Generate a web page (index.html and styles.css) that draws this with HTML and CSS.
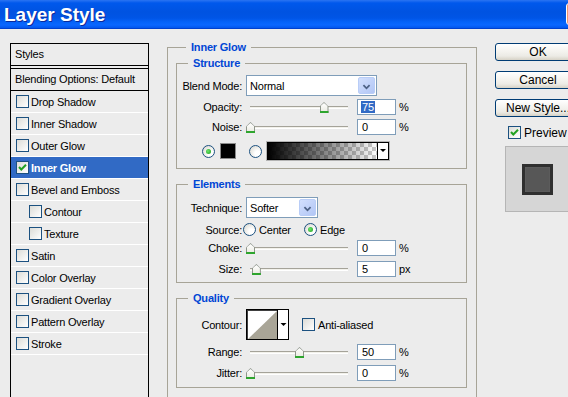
FILE: index.html
```html
<!DOCTYPE html>
<html lang="en">
<head>
  <meta charset="UTF-8">
  <title>Layer Style</title>
  <link rel="stylesheet" href="styles.css">
</head>
<body>
<div class="window">
  <div class="titlebar">
    <span class="title">Layer Style</span>
    <span class="close"></span>
  </div>

  <div class="main">
    <!-- list of effects -->
    <div class="styles-panel">
      <div class="panel-head">Styles</div>
      <div class="panel-blend">Blending Options: Default</div>
      <div class="style-item"><span class="check"></span>Drop Shadow</div>
      <div class="style-item"><span class="check"></span>Inner Shadow</div>
      <div class="style-item"><span class="check"></span>Outer Glow</div>
      <div class="style-item selected"><span class="check"><svg width="11" height="11" viewBox="0 0 11 11"><polyline points="2,5 4.3,7.5 9,2.8" fill="none" stroke="#21A121" stroke-width="2"/></svg></span>Inner Glow</div>
      <div class="style-item"><span class="check"></span>Bevel and Emboss</div>
      <div class="style-item sub"><span class="check"></span>Contour</div>
      <div class="style-item sub"><span class="check"></span>Texture</div>
      <div class="style-item"><span class="check"></span>Satin</div>
      <div class="style-item"><span class="check"></span>Color Overlay</div>
      <div class="style-item"><span class="check"></span>Gradient Overlay</div>
      <div class="style-item"><span class="check"></span>Pattern Overlay</div>
      <div class="style-item"><span class="check"></span>Stroke</div>
    </div>

    <!-- settings -->
    <div class="effect">
      <span class="group-title outer">Inner Glow</span>

      <div class="group structure">
        <span class="group-title">Structure</span>
        <div class="row blend-row">
          <span class="label">Blend Mode:</span>
          <div class="select blend">Normal
            <span class="drop"><svg width="17" height="17" viewBox="0 0 17 17"><polyline points="5,7 8.5,10.5 12,7" fill="none" stroke="#4D6185" stroke-width="2"/></svg></span>
          </div>
        </div>
        <div class="row field-row first">
          <span class="label">Opacity:</span>
          <div class="slider"><div class="track"></div><span class="thumb" style="left: 75%"></span></div>
          <span class="field"><span class="sel">75</span></span>
          <span class="unit">%</span>
        </div>
        <div class="row field-row">
          <span class="label">Noise:</span>
          <div class="slider"><div class="track"></div><span class="thumb" style="left: 0%"></span></div>
          <span class="field">0</span>
          <span class="unit">%</span>
        </div>
        <div class="row color-row">
          <span class="radio on"></span>
          <span class="swatch"></span>
          <span class="radio second"></span>
          <span class="gradient"><span class="gradient-fill"></span><span class="gradient-drop"></span></span>
        </div>
      </div>

      <div class="group elements">
        <span class="group-title">Elements</span>
        <div class="row blend-row tech-row">
          <span class="label">Technique:</span>
          <div class="select technique">Softer
            <span class="drop"><svg width="17" height="17" viewBox="0 0 17 17"><polyline points="5,7 8.5,10.5 12,7" fill="none" stroke="#4D6185" stroke-width="2"/></svg></span>
          </div>
        </div>
        <div class="row source-row">
          <span class="label">Source:</span>
          <span class="radio src"></span>
          <span class="opt center">Center</span>
          <span class="radio on"></span>
          <span class="opt">Edge</span>
        </div>
        <div class="row field-row choke">
          <span class="label">Choke:</span>
          <div class="slider"><div class="track"></div><span class="thumb" style="left: 0%"></span></div>
          <span class="field">0</span>
          <span class="unit">%</span>
        </div>
        <div class="row field-row">
          <span class="label">Size:</span>
          <div class="slider"><div class="track"></div><span class="thumb" style="left: 6%"></span></div>
          <span class="field">5</span>
          <span class="unit">px</span>
        </div>
      </div>

      <div class="group quality">
        <span class="group-title">Quality</span>
        <div class="row contour-row">
          <span class="label">Contour:</span>
          <span class="contour">
            <svg width="43" height="31" viewBox="0 0 43 31">
              <rect x="0.5" y="0.5" width="42" height="30" fill="#fff" stroke="#000"/>
              <line x1="1.5" y1="1" x2="1.5" y2="30" stroke="#404040"/>
              <line x1="1" y1="1.5" x2="31" y2="1.5" stroke="#404040"/>
              <polygon points="2,30 31,2 31,30" fill="#A9A597"/>
              <line x1="31.5" y1="1" x2="31.5" y2="30" stroke="#000"/>
              <polygon points="34.5,14 40.5,14 37.5,17" fill="#000"/>
            </svg>
          </span>
          <span class="check aa"></span>
          <span class="opt">Anti-aliased</span>
        </div>
        <div class="row field-row range">
          <span class="label">Range:</span>
          <div class="slider"><div class="track"></div><span class="thumb" style="left: 50%"></span></div>
          <span class="field">50</span>
          <span class="unit">%</span>
        </div>
        <div class="row field-row">
          <span class="label">Jitter:</span>
          <div class="slider"><div class="track"></div><span class="thumb" style="left: 0%"></span></div>
          <span class="field">0</span>
          <span class="unit">%</span>
        </div>
      </div>
    </div>

    <!-- buttons and preview -->
    <div class="actions">
      <button class="btn">OK</button>
      <button class="btn">Cancel</button>
      <button class="btn last">New Style...</button>
      <div class="preview-check">
        <span class="check"><svg width="11" height="11" viewBox="0 0 11 11"><polyline points="2,5 4.3,7.5 9,2.8" fill="none" stroke="#21A121" stroke-width="2"/></svg></span>
        <span class="opt">Preview</span>
      </div>
      <div class="preview-box"><div class="preview-square"></div></div>
    </div>
  </div>
</div>
</body>
</html>
```

FILE: styles.css
```css
* {
  box-sizing: border-box;
}
body {
  margin: 0;
  background: #ECECEC;
  font-family: "Liberation Sans", Arial, sans-serif;
  font-size: 11px;
  letter-spacing: -0.2px;
  color: #000;
}
.window {
  width: 568px;
  height: 397px;
  overflow: hidden;
}
.titlebar {
  height: 29px;
  border-bottom: 1px solid #0041CF;
  background: linear-gradient(to bottom, #2B74F2 0, #0058EC 3px, #0053E1 12px, #0055E6 18px, #0563F8 22px, #0A67FF 25px, #0256EC 28px);
  display: flex;
  align-items: center;
  padding-left: 4px;
}
.title {
  color: #fff;
  font-weight: bold;
  font-size: 19px;
  letter-spacing: 0;
  text-shadow: 1px 1px 0 #0B2A9A;
  margin-top: 1px;
}
.close {
  margin-left: auto;
  margin-right: -21px;
  width: 23px;
  height: 22px;
  border: 1px solid #fff;
  border-radius: 3px;
  background: #E0582F;
  box-shadow: inset 1px 0 0 #F09470;
}
.main {
  display: flex;
  align-items: flex-start;
  padding: 14px 0 0 10px;
}

/* styles list */
.styles-panel {
  flex-shrink: 0;
  width: 139px;
  height: 360px;
  border: 1px solid #000;
  border-bottom: none;
}
.panel-head {
  height: 22px;
  line-height: 20px;
  padding-left: 4px;
  border-bottom: 1px solid #000;
  margin-bottom: 2px;
}
.panel-blend {
  height: 23px;
  line-height: 20px;
  padding-left: 4px;
  border-top: 1px solid #000;
  border-bottom: 1px solid #000;
}
.style-item {
  height: 22px;
  display: flex;
  align-items: center;
  padding-left: 5px;
  border-bottom: 1px solid #fff;
}
.style-item.sub {
  padding-left: 18px;
}
.style-item .check {
  margin-right: 2px;
}
.style-item.selected {
  background: #316AC5;
  color: #fff;
  font-weight: bold;
}
.check {
  flex-shrink: 0;
  width: 13px;
  height: 13px;
  border: 1px solid #1C5180;
  background: linear-gradient(135deg, #DCDCD7, #fff);
  display: flex;
}

/* effect settings */
.effect {
  flex-shrink: 0;
  width: 310px;
  height: 360px;
  margin: 4px 18px 0;
  padding: 0 9px 0 8px;
  border: 1px solid #A7A497;
  border-bottom: none;
}
.group {
  border: 1px solid #A7A497;
}
.group-title {
  display: block;
  width: max-content;
  height: 13px;
  line-height: 13px;
  margin: -7px 0 0 11px;
  padding: 0 5px;
  background: #ECECEC;
  color: #0046D5;
  font-weight: bold;
}
.group-title.outer {
  margin-left: 10px;
}
.structure {
  margin-top: 9px;
  padding-bottom: 8px;
}
.elements {
  margin-top: 15px;
  padding-bottom: 5px;
}
.quality {
  margin-top: 15px;
  padding-bottom: 6px;
}
.row {
  display: flex;
  align-items: center;
}
.label {
  flex-shrink: 0;
  width: 65px;
  text-align: right;
}
.blend-row {
  margin-top: 5px;
  height: 21px;
}
.tech-row {
  margin-top: 6px;
}
.select {
  margin-left: 4px;
  height: 21px;
  border: 1px solid #7F9DB9;
  background: #fff;
  display: flex;
  align-items: center;
  padding-left: 3px;
}
.select.blend {
  width: 131px;
}
.select.technique {
  width: 72px;
}
.drop {
  margin-left: auto;
  margin-right: 1px;
  width: 17px;
  height: 17px;
  border: 1px solid #B9CDF7;
  border-radius: 2px;
  background: linear-gradient(135deg, #D2DFFD, #B2C6F5);
  display: flex;
}
.field-row {
  margin-top: 4px;
  height: 16px;
}
.field-row.first {
  margin-top: 3px;
}
.quality .field-row + .field-row,
.elements .field-row + .field-row {
  margin-top: 5px;
}
.slider {
  position: relative;
  width: 98px;
  height: 16px;
  margin-left: 8px;
}
.track {
  margin-top: 7px;
  height: 3px;
  border-top: 1px solid #A5A399;
  border-bottom: 1px solid #fff;
  background: #F2F1EB;
}
.thumb {
  position: absolute;
  top: 3px;
  width: 9px;
  height: 11px;
  margin-left: -4px;
  clip-path: polygon(50% 0, 100% 40%, 100% 100%, 0 100%, 0 40%);
  background: #8F968C;
}
.thumb::before {
  content: "";
  position: absolute;
  left: 1px;
  right: 1px;
  top: 1px;
  bottom: 2px;
  clip-path: polygon(50% 0, 100% 38%, 100% 100%, 0 100%, 0 38%);
  background: linear-gradient(to bottom, #fff, #EDEDE5);
}
.thumb::after {
  content: "";
  position: absolute;
  left: 0;
  right: 0;
  bottom: 0;
  height: 2px;
  background: #2EA52E;
}
.field {
  flex-shrink: 0;
  width: 39px;
  height: 16px;
  margin-left: 9px;
  border: 1px solid #7F9DB9;
  background: #fff;
  padding-left: 4px;
  line-height: 14px;
}
.sel {
  margin-left: -1px;
  padding: 0 1px;
  background: #316AC5;
  color: #fff;
}
.unit {
  margin-left: 3px;
}
.color-row {
  margin-top: 7px;
  height: 18px;
}
.radio {
  flex-shrink: 0;
  position: relative;
  width: 13px;
  height: 13px;
  border-radius: 50%;
  border: 1px solid #1C5180;
  background: radial-gradient(circle at 70% 70%, #fff 0, #fff 25%, #D4D2C8 100%);
}
.radio.on::after {
  content: "";
  position: absolute;
  left: 3px;
  top: 3px;
  width: 5px;
  height: 5px;
  border-radius: 50%;
  background: radial-gradient(circle at 40% 40%, #6BE86B, #1C9A1C);
}
.color-row .radio {
  margin-left: 25px;
}
.color-row .radio.second {
  margin-left: 13px;
}
.swatch {
  width: 16px;
  height: 16px;
  margin-left: 5px;
  background: #000;
  border: 1px solid #8A8A8A;
}
.gradient {
  display: flex;
  width: 122px;
  height: 18px;
  margin-left: 5px;
  border: 1px solid #000;
  box-shadow: 0 0 0 1px #B4B4B4;
  background: #fff;
}
.gradient-fill {
  flex: 1;
  background: linear-gradient(to right, #000, rgba(0, 0, 0, 0)), repeating-conic-gradient(#C8C8C8 0 25%, #fff 0 50%) 0 0 / 8px 8px;
  border-right: 1px solid #000;
}
.gradient-drop {
  width: 10px;
  position: relative;
}
.gradient-drop::after {
  content: "";
  position: absolute;
  left: 2px;
  top: 6px;
  border-left: 3px solid transparent;
  border-right: 3px solid transparent;
  border-top: 3px solid #000;
}
.source-row {
  margin-top: 5px;
  height: 13px;
}
.radio.src {
  margin-left: 1px;
}
.opt {
  margin-left: 3px;
}
.opt.center {
  width: 45px;
}
.contour-row {
  margin-top: 4px;
  height: 31px;
}
.contour {
  display: flex;
  margin-left: 4px;
}
.check.aa {
  margin-left: 13px;
}

/* buttons and preview */
.actions {
  flex-shrink: 0;
  display: flex;
  flex-direction: column;
  width: 90px;
}
.btn {
  width: 86px;
  height: 18px;
  margin: 0 0 10px;
  padding: 0;
  border: 1px solid #003C74;
  border-radius: 3px;
  background: linear-gradient(to bottom, #fff 0, #F6F5F1 40%, #ECEBE5 75%, #D6D2C6 100%);
  font-family: "Liberation Sans", Arial, sans-serif;
  font-size: 12px;
  line-height: 16px;
  letter-spacing: 0;
  color: #000;
}
.btn.last {
  margin-bottom: 9px;
}
.preview-check {
  display: flex;
  align-items: center;
  height: 13px;
  padding-left: 13px;
  font-size: 12px;
  letter-spacing: 0;
}
.preview-box {
  width: 65px;
  height: 66px;
  margin: 7px 0 0 10px;
  border: 1px solid #B5B5B5;
  background: #D6D6D6;
  padding: 17px 0 0 16px;
}
.preview-square {
  width: 31px;
  height: 31px;
  border: 3px solid #2F2F2F;
  background: #575757;
  box-shadow: inset 0 0 2px #6A6A6A;
}
```
